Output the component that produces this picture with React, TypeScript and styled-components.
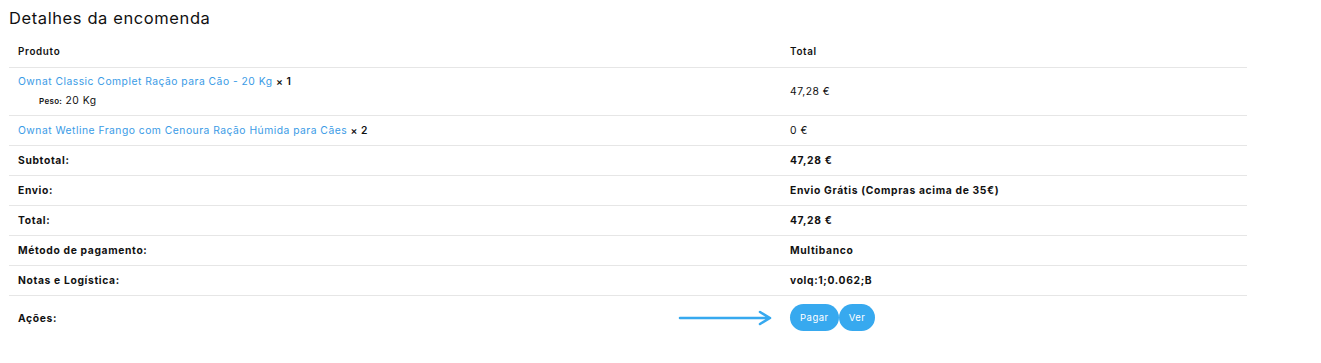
import React from "react";
import styled, { createGlobalStyle } from "styled-components";

const Global = createGlobalStyle`
  html, body { margin: 0; padding: 0; background: #fff; }
  body { font-family: Inter, "Noto Sans", sans-serif; color: #111; }
`;

const Page = styled.div`
  padding: 6px 74px 0 9px;
`;

const Title = styled.h2`
  margin: 0 0 5px 0;
  font-size: 16.5px;
  font-weight: 400;
  line-height: 24px;
  color: #111;
  letter-spacing: 0.6px;
`;

const Table = styled.table`
  width: 1238px;
  border-collapse: collapse;
  font-size: 10.3px;
  letter-spacing: 0.5px;
`;

const Th = styled.th`
  text-align: left;
  font-weight: 600;
  font-size: 9.8px;
  letter-spacing: 0.7px;
  padding: 10px 9px 10px 9px;
  height: 12px;
  border-bottom: 1px solid #e6e6e6;
  &:first-child { width: 754px; }
`;

const Tr = styled.tr<{ $last?: boolean }>`
  border-bottom: ${(p) => (p.$last ? "none" : "1px solid #e6e6e6")};
`;

const Td = styled.td<{ $bold?: boolean }>`
  padding: 8px 9px;
  line-height: 13px;
  font-weight: ${(p) => (p.$bold ? 700 : 400)};
  letter-spacing: ${(p) => (p.$bold ? "0.65px" : "0.5px")};
  vertical-align: middle;
`;

const ProductCell = styled(Td)`
  padding: 7px 9px 7px;
`;

const ProductLink = styled.a`
  color: #3a9be6;
  text-decoration: none;
`;

const Qty = styled.strong`
  font-weight: 600;
`;

const Meta = styled.div`
  margin: 6px 0 0 21px;
  font-size: 10.3px;
  line-height: 13px;
`;

const MetaKey = styled.span`
  font-size: 8px;
  font-weight: 600;
  letter-spacing: 0.3px;
`;

const ActionsCell = styled(Td)`
  padding: 8px 9px 9px;
`;

const Actions = styled.div`
  display: flex;
  align-items: center;
  position: relative;
`;

const Arrow = styled.svg`
  position: absolute;
  left: -112px;
  top: 50%;
  transform: translateY(-50%);
`;

const Btn = styled.a`
  display: inline-flex;
  align-items: center;
  justify-content: center;
  height: 27px;
  padding: 0 10px;
  border-radius: 14px;
  background: #37a9ef;
  color: #fff;
  font-size: 9.5px;
  letter-spacing: 0.5px;
  text-decoration: none;
`;

export default function App() {
  return (
    <>
      <Global />
      <Page>
        <Title>Detalhes da encomenda</Title>
        <Table>
          <thead>
            <tr>
              <Th>Produto</Th>
              <Th>Total</Th>
            </tr>
          </thead>
          <tbody>
            <Tr>
              <ProductCell>
                <ProductLink href="#">Ownat Classic Complet Ração para Cão - 20 Kg</ProductLink>{" "}
                <Qty>× 1</Qty>
                <Meta>
                  <MetaKey>Peso:</MetaKey> 20 Kg
                </Meta>
              </ProductCell>
              <Td>47,28 €</Td>
            </Tr>
            <Tr>
              <Td>
                <ProductLink href="#">Ownat Wetline Frango com Cenoura Ração Húmida para Cães</ProductLink>{" "}
                <Qty>× 2</Qty>
              </Td>
              <Td>0 €</Td>
            </Tr>
            <Tr>
              <Td $bold>Subtotal:</Td>
              <Td $bold>47,28 €</Td>
            </Tr>
            <Tr>
              <Td $bold>Envio:</Td>
              <Td $bold>Envio Grátis (Compras acima de 35€)</Td>
            </Tr>
            <Tr>
              <Td $bold>Total:</Td>
              <Td $bold>47,28 €</Td>
            </Tr>
            <Tr>
              <Td $bold>Método de pagamento:</Td>
              <Td $bold>Multibanco</Td>
            </Tr>
            <Tr>
              <Td $bold>Notas e Logística:</Td>
              <Td $bold>volq:1;0.062;B</Td>
            </Tr>
            <Tr $last>
              <Td $bold>Ações:</Td>
              <ActionsCell>
                <Actions>
                  <Arrow width="96" height="16" viewBox="0 0 96 16">
                    <path d="M2 8 H92 M82 2 L92 8 L82 14" fill="none" stroke="#37a9ef" strokeWidth="2.6" strokeLinecap="round" strokeLinejoin="round" />
                  </Arrow>
                  <Btn href="#">Pagar</Btn>
                  <Btn href="#">Ver</Btn>
                </Actions>
              </ActionsCell>
            </Tr>
          </tbody>
        </Table>
      </Page>
    </>
  );
}
